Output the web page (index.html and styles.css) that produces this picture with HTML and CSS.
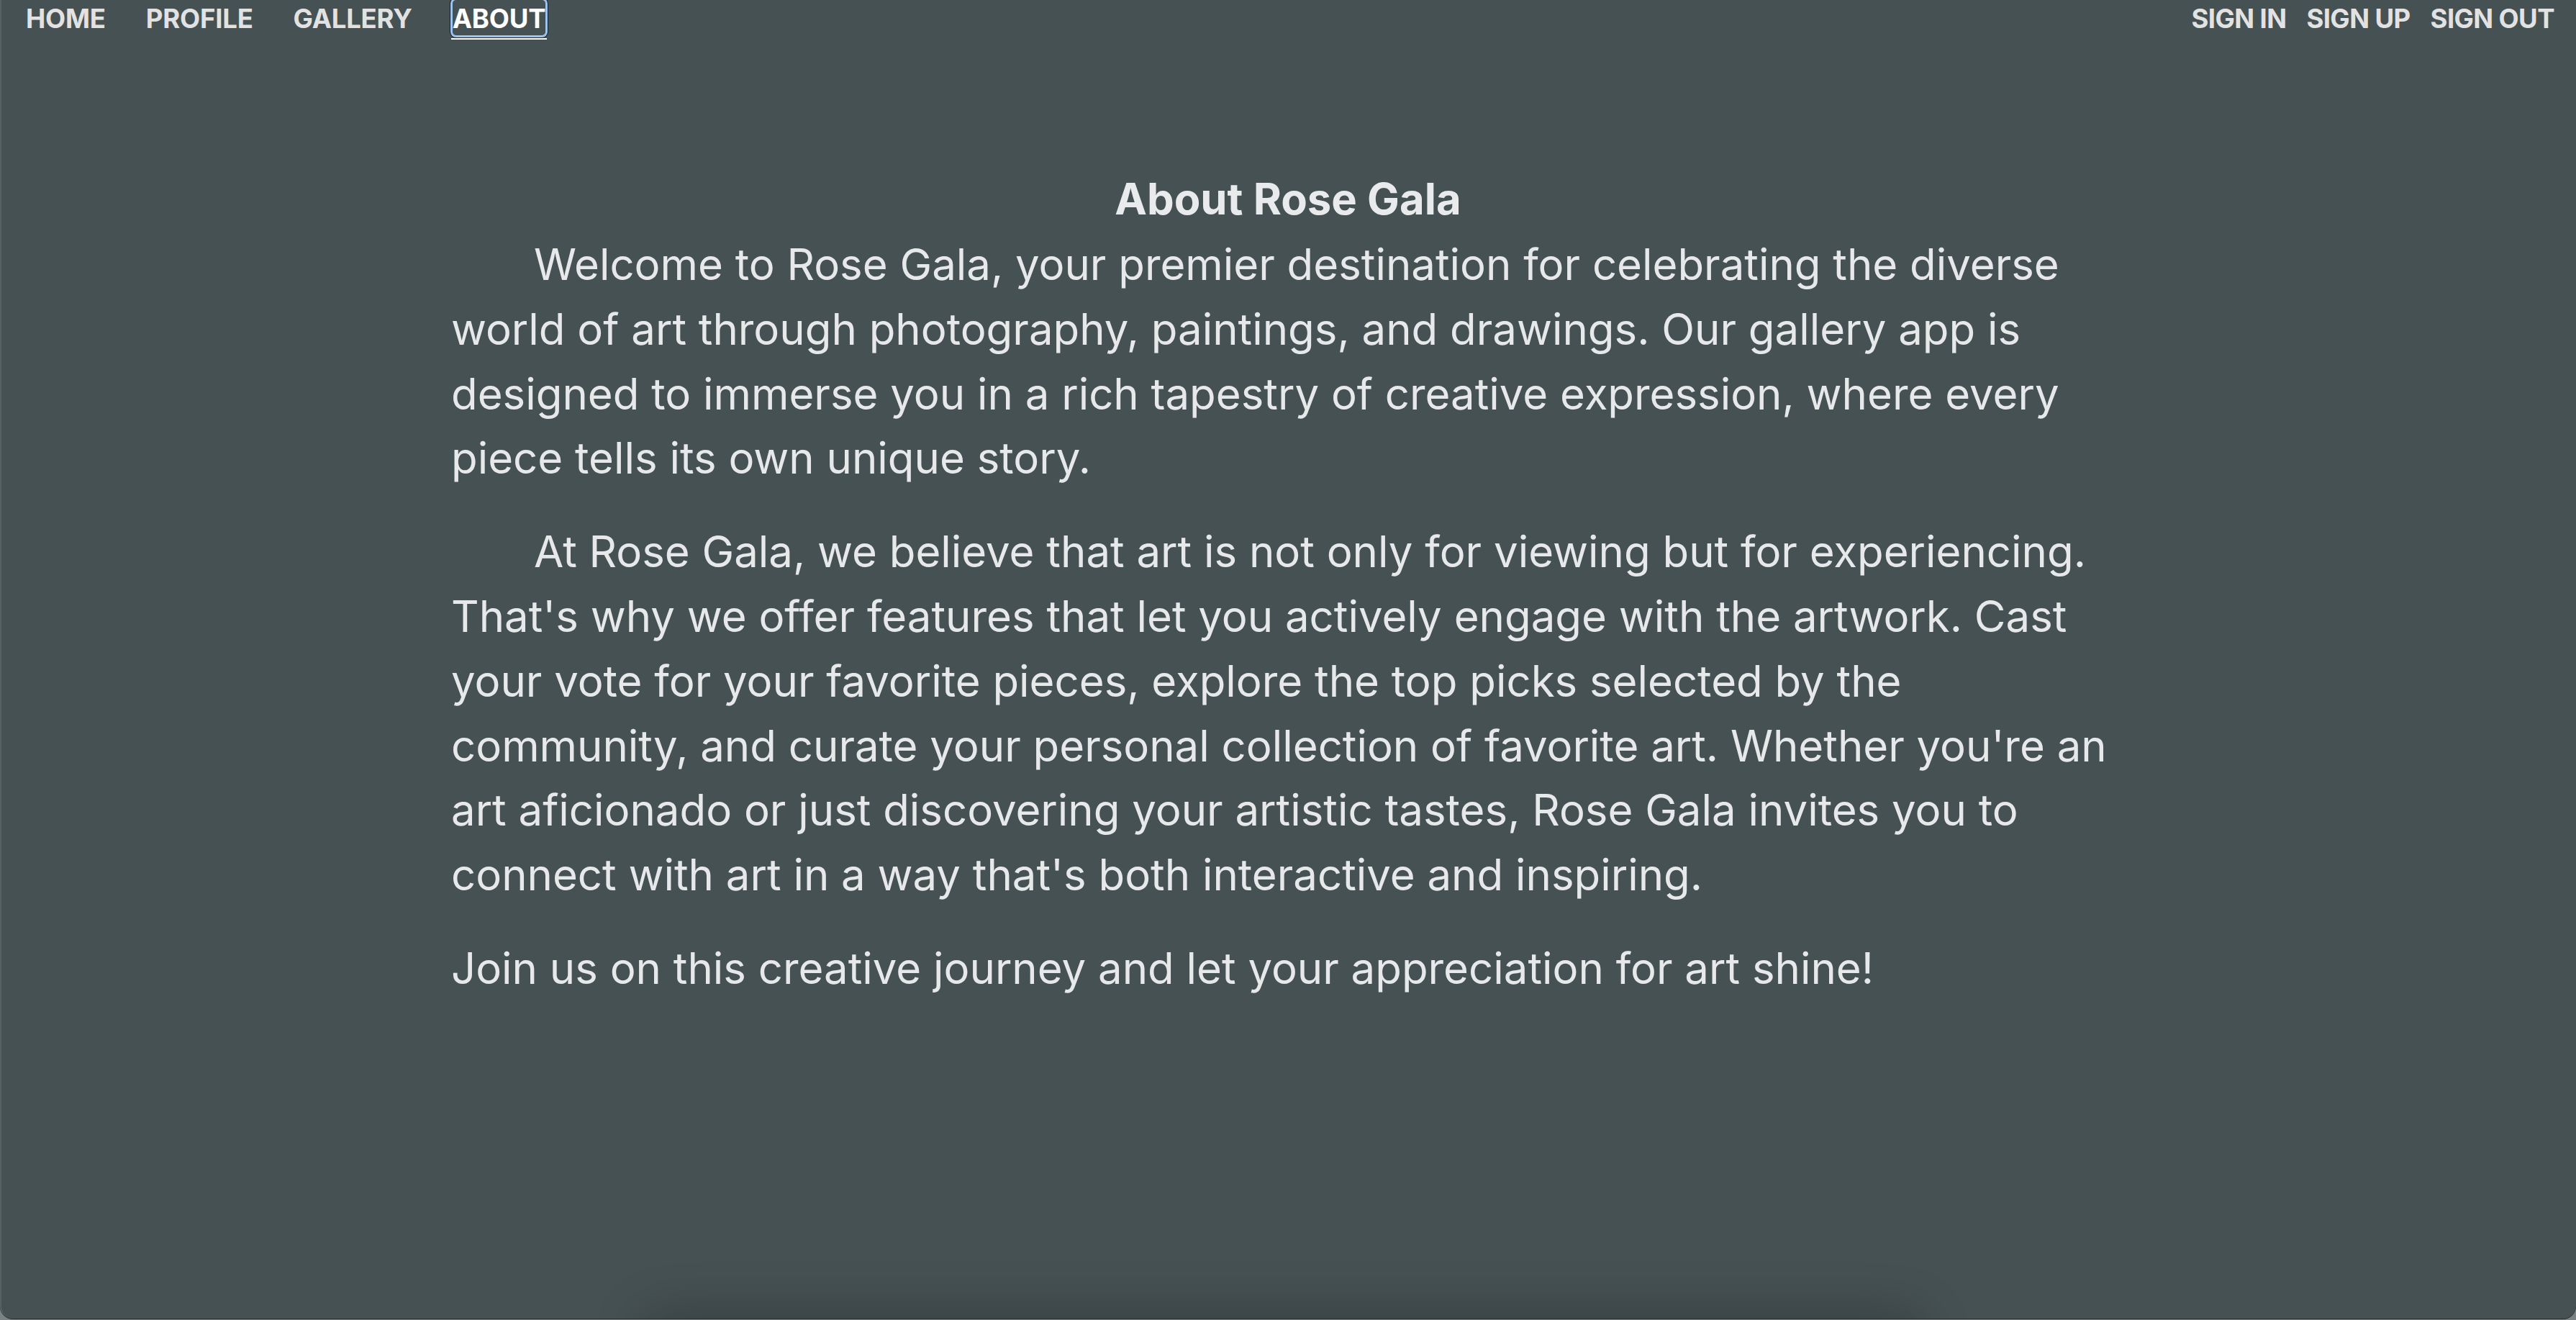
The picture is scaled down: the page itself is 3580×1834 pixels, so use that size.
FILE: index.html
```html
<!DOCTYPE html>
<html lang="en">
<head>
<meta charset="utf-8">
<title>About Rose Gala</title>
<link rel="stylesheet" href="styles.css">
</head>
<body>
<div class="app">
  <nav class="nav">
    <div class="nav-group nav-left">
      <a class="nav-link" href="#">Home</a>
      <a class="nav-link" href="#">Profile</a>
      <a class="nav-link" href="#">Gallery</a>
      <a class="nav-link active" href="#">About</a>
    </div>
    <div class="nav-group nav-right">
      <a class="nav-link" href="#">Sign In</a>
      <a class="nav-link" href="#">Sign Up</a>
      <a class="nav-link" href="#">Sign Out</a>
    </div>
  </nav>
  <main class="about">
    <h1 class="about-title">About Rose Gala</h1>
    <p class="about-text indent">Welcome to Rose Gala, your premier destination for celebrating the diverse world of art through photography, paintings, and drawings. Our gallery app is designed to immerse you in a rich tapestry of creative expression, where every piece tells its own unique story.</p>
    <p class="about-text indent">At Rose Gala, we believe that art is not only for viewing but for experiencing. That's why we offer features that let you actively engage with the artwork. Cast your vote for your favorite pieces, explore the top picks selected by the community, and curate your personal collection of favorite art. Whether you're an art aficionado or just discovering your artistic tastes, Rose Gala invites you to connect with art in a way that's both interactive and inspiring.</p>
    <p class="about-text">Join us on this creative journey and let your appreciation for art shine!</p>
  </main>
  <div class="below-fold"></div>
</div>
</body>
</html>
```

FILE: styles.css
```css
html, body {
  margin: 0;
  padding: 0;
}

body {
  background: #7b8382;
  font-family: Inter, "Noto Sans", "Liberation Sans", sans-serif;
  height: 1834px;
  overflow: hidden;
}

.app {
  position: relative;
  height: 1832px;
  background: #465153;
  border-left: 2px solid #566164;
  border-radius: 0 0 18px 18px;
  box-shadow: 0 1px 0 0 #2a2d2e;
  overflow: hidden;
  box-sizing: border-box;
}

.nav {
  display: flex;
  justify-content: space-between;
  align-items: flex-start;
  padding: 0 30px 0 34px;
}

.nav-group {
  display: flex;
}

.nav-left {
  gap: 56px;
}

.nav-right {
  gap: 28px;
}

.nav-link {
  position: relative;
  display: block;
  font-size: 36.5px;
  line-height: 49px;
  padding-top: 2px;
  height: 47px;
  font-weight: 700;
  text-transform: uppercase;
  color: #e2e2e2;
  text-decoration: none;
  letter-spacing: -0.2px;
}

.nav-right .nav-link {
  letter-spacing: -0.6px;
}

.nav-link.active {
  color: #ffffff;
  border-radius: 5px;
  box-shadow: 0 0 0 3px #9cc3ee, 0 0 0 4px #1c1f20;
}

.nav-link.active::after {
  content: "";
  position: absolute;
  left: -2px;
  right: -2px;
  top: calc(100% + 4px);
  height: 2px;
  background: #ffffff;
}

.about {
  width: 2326px;
  margin: 182px auto 0;
  padding-right: 2px;
  color: #e6e8ea;
}

.about-title {
  margin: 0 0 2px;
  text-align: center;
  font-size: 59.8px;
  line-height: 90px;
  font-weight: 700;
  color: #e8eaec;
}

.about-text {
  margin: 0 0 40px;
  font-size: 59.9px;
  line-height: 89.8px;
  font-weight: 400;
}

.about-text.indent {
  text-indent: 115px;
}

.below-fold {
  position: absolute;
  left: 900px;
  width: 1760px;
  top: 1834px;
  height: 200px;
  border-radius: 20px;
  box-shadow: 0 0 70px 10px rgba(0, 0, 0, 0.22);
}
```
